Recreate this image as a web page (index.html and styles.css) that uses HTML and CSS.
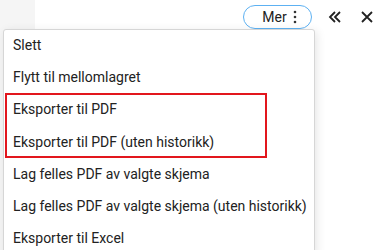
FILE: index.html
```html
<!DOCTYPE html>
<html lang="no">
<head>
    <meta charset="UTF-8">
    <meta name="viewport" content="width=device-width, initial-scale=1.0">
    <title>Mer</title>
    <link rel="stylesheet" href="styles.css">
</head>
<body>
    <div class="side"></div>
    <div class="main">
        <div class="toolbar">
            <button class="more-btn">
                <span>Mer</span>
                <svg width="4" height="14" viewBox="0 0 4 14"><circle cx="2" cy="2" r="1.3"/><circle cx="2" cy="7" r="1.3"/><circle cx="2" cy="12" r="1.3"/></svg>
            </button>
            <button class="icon-btn">
                <svg width="14" height="14" viewBox="0 0 14 14" fill="none" stroke="#222" stroke-width="1.8"><path d="M7 2 L2 7 L7 12"/><path d="M12 2 L7 7 L12 12"/></svg>
            </button>
            <button class="icon-btn">
                <svg width="12" height="12" viewBox="0 0 12 12" fill="none" stroke="#222" stroke-width="1.8"><path d="M1 1 L11 11 M11 1 L1 11"/></svg>
            </button>
        </div>
    </div>
    <ul class="menu">
        <li>Slett</li>
        <li>Flytt til mellomlagret</li>
        <li class="marked">Eksporter til PDF</li>
        <li class="marked">Eksporter til PDF (uten historikk)</li>
        <li>Lag felles PDF av valgte skjema</li>
        <li>Lag felles PDF av valgte skjema (uten historikk)</li>
        <li>Eksporter til Excel</li>
    </ul>
    <div class="highlight"></div>
</body>
</html>
```

FILE: styles.css
```css
body {
    margin: 0;
    width: 392px;
    height: 250px;
    overflow: hidden;
    position: relative;
    font-family: Roboto, "Noto Sans", sans-serif;
    color: #222;
    background-color: #fff;
}
.side {
    position: absolute;
    left: 0;
    top: 0;
    width: 35px;
    height: 250px;
    background-color: #f5f5f5;
}
.toolbar {
    display: flex;
    justify-content: flex-end;
    align-items: center;
    padding: 5px 10px 0 0;
}
.more-btn {
    display: flex;
    align-items: center;
    justify-content: center;
    gap: 6px;
    box-sizing: border-box;
    width: 69px;
    height: 24px;
    padding: 0 0 0 4px;
    margin: 0 6px 0 0;
    border: 1px solid #5db1f2;
    border-radius: 12px;
    background-color: #fff;
    font-family: inherit;
    font-size: 14px;
    color: #222;
}
.more-btn svg {
    fill: #333;
}
.icon-btn {
    display: flex;
    align-items: center;
    justify-content: center;
    box-sizing: border-box;
    width: 30px;
    height: 24px;
    padding: 0;
    margin: 0 0 0 2px;
    border: none;
    background: none;
}
.menu {
    position: absolute;
    left: 3px;
    top: 29px;
    width: 310px;
    margin: 0;
    padding: 0;
    list-style: none;
    background-color: #fff;
    border: 1px solid #d6d6d6;
    border-radius: 3px;
    box-shadow: 2px 2px 10px rgba(0, 0, 0, 0.1);
}
.menu li {
    height: 32.2px;
    line-height: 31px;
    padding-left: 9px;
    font-size: 14px;
    white-space: nowrap;
}
.highlight {
    position: absolute;
    left: 5px;
    top: 93px;
    width: 258px;
    height: 61px;
    border: 2.5px solid #e2161d;
}
```
